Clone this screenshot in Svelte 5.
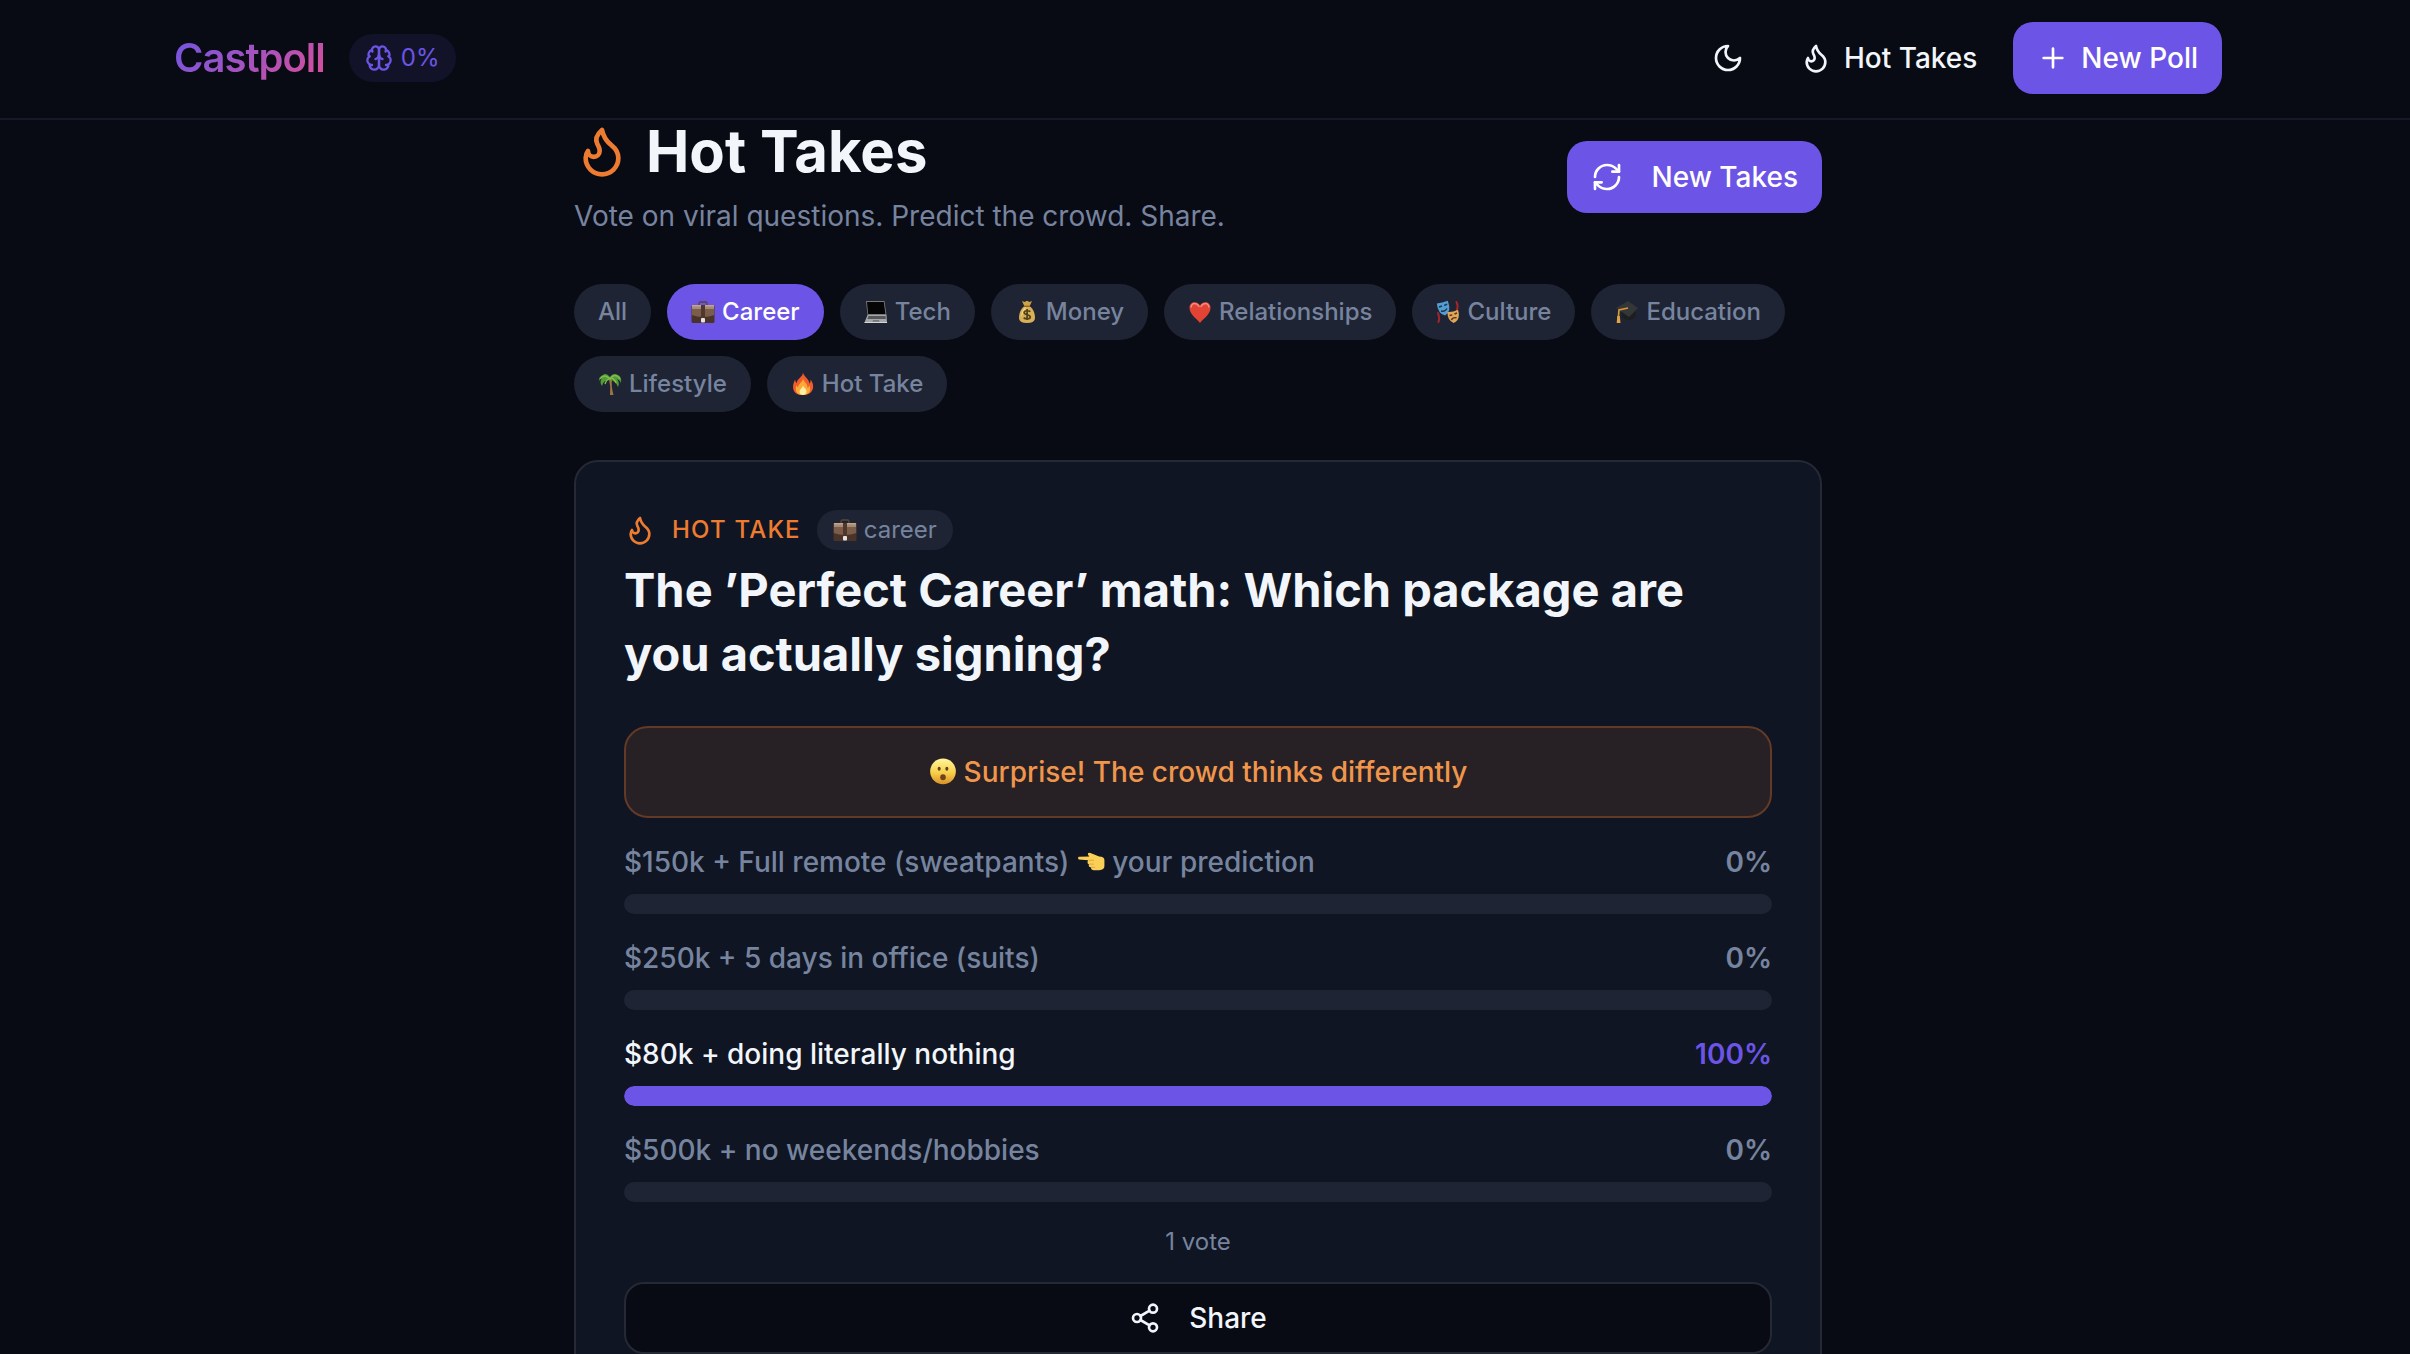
<script>
  let dark = $state(true);
  let active = $state('career');

  const categories = [
    { id: 'all', label: 'All' },
    { id: 'career', label: 'Career', emoji: 'briefcase' },
    { id: 'tech', label: 'Tech', emoji: 'laptop' },
    { id: 'money', label: 'Money', emoji: 'money' },
    { id: 'relationships', label: 'Relationships', emoji: 'heart' },
    { id: 'culture', label: 'Culture', emoji: 'masks' },
    { id: 'education', label: 'Education', emoji: 'cap' },
    { id: 'lifestyle', label: 'Lifestyle', emoji: 'palm' },
    { id: 'hot-take', label: 'Hot Take', emoji: 'fire' }
  ];

  const options = [
    { text: '$150k + Full remote (sweatpants)', percent: 0, predicted: true },
    { text: '$250k + 5 days in office (suits)', percent: 0 },
    { text: '$80k + doing literally nothing', percent: 100, winner: true },
    { text: '$500k + no weekends/hobbies', percent: 0 }
  ];
</script>

{#snippet flame()}
  <path d="M8.5 14.5A2.5 2.5 0 0 0 11 12c0-1.38-.5-2-1-3-1.072-2.143-.224-4.054 2-6 .5 2.5 2 4.9 4 6.5 2 1.6 3 3.5 3 5.5a7 7 0 1 1-14 0c0-1.153.433-2.294 1-3a2.5 2.5 0 0 0 2.5 2.5z" />
{/snippet}

{#snippet emoji(name)}
  <svg class="emoji" viewBox="0 0 24 24" aria-hidden="true">
    {#if name === 'briefcase'}
      <path d="M8 5V3.500q0-1.500 1.500-1.500h5q1.500 0 1.500 1.500V5" fill="none" stroke="#5a4636" stroke-width="1.300" />
      <rect x="0.500" y="5" width="23" height="18" rx="1.500" fill="#4a3328" />
      <path d="M.8 5h22.400v10q-5 2-11.200 2T.8 15z" fill="#7a5e4b" />
      <path d="M1 5h22v4H1z" fill="#a58a74" />
      <path d="M1 5h22v1.500H1z" fill="#c0a48c" />
      <path d="M10 5h4v14h-4z" fill="#50372b" />
      <rect x="10" y="18" width="4" height="4.500" rx="1" fill="#e6e3df" />
    {:else if name === 'laptop'}
      <path d="M2 1h18.500l2 14H3.500z" fill="#77797c" />
      <path d="M3 2h16.800l1.600 12H4.200z" fill="#050506" />
      <path d="M3.500 15h19l.5 7.500H.5z" fill="#a5a6a8" />
      <path d="M4.500 16h17l.4 3H3.500z" fill="#55575b" />
      <path d="M9 20h6l.5 1.800h-7z" fill="#77787a" />
      <path d="M.5 22h22.600v1H.5z" fill="#d4d5d6" />
    {:else if name === 'money'}
      <path d="M7 1l2.500 1L12 .7l2.500 1.200L17 1l-2.500 5.500h-5z" fill="#cba447" />
      <path d="M9.500 6h5C18.500 9 20 13.500 20 18q0 5-8 5t-8-5c0-4.500 1.500-9 5.500-12z" fill="#d7b057" />
      <path d="M7 12c1-2.500 2-4 4-5-.5 3-3 6-5 10z" fill="#f3d98b" />
      <path d="M9 6.300h6" stroke="#956627" stroke-width="1.400" />
      <path d="M15.300 11.800c-1-1.300-6.200-1.700-6.200.8 0 2.800 6.200 1.400 6.200 4.400 0 2.700-5.300 2.200-6.600.6M12.100 9v11" fill="none" stroke="#51421b" stroke-width="1.700" />
    {:else if name === 'heart'}
      <path d="M12 23C8.500 18.500 1.500 14.500 1.500 7.800 1.500 1.500 9 .5 12 5.300 15 .5 22.500 1.500 22.500 7.800 22.500 14.500 15.500 18.500 12 23z" fill="#e24332" />
      <path d="M3 7C4 2 9 2.500 11 6.500M13 6.500C15 2.500 20 2 21 7" fill="none" stroke="#f28b7f" stroke-width="1.500" stroke-linecap="round" />
    {:else if name === 'masks'}
      <path d="M2 13q2 5 .5 9M20.500 2q2 4 .5 8" fill="none" stroke="#a2262a" stroke-width="2" stroke-linecap="round" />
      <path d="M.8 3.500Q6 3 11.800.800 16 12 9 15.500 2 14 .8 3.500z" fill="#559dd1" />
      <path d="M3 7l3-1M8.200 5.500l3-1.300M5 11q4 1 6-2.500" fill="none" stroke="#173854" stroke-width="1.400" />
      <path d="M11.500 12q5 .5 10.500-2.200Q25 20 17.500 23 11 20 11.500 12z" fill="#e1a657" />
      <path d="M13.500 15.500l2.800-.6M18.500 14l2.500-1M15.500 20q1-3 5-2.200" fill="none" stroke="#55351d" stroke-width="1.400" />
    {:else if name === 'cap'}
      <path d="M6 10l14-1 1 7q-5 7-13 2z" fill="#1d1e1f" />
      <path d="M1 8L13 1l10 7-9 9z" fill="#343638" />
      <path d="M13 8L4 10l-1 12" fill="none" stroke="#d99733" stroke-width="1.700" />
      <path d="M2.300 16h2.500l.7 7H1.700z" fill="#e2a442" />
    {:else if name === 'palm'}
      <path d="M11 7h3q-1 7 1.500 16h-3.500q1-8-1-16z" fill="#a27442" />
      <path d="M12 8Q5 8 4 14 1 10 4 6q-3 1-3 4Q0 5 5 3q3-3 7 2 3-5 8-2 4 2 3 8-1-3-4-4 3 4 1 8-2-6-8-7z" fill="#529c37" />
      <path d="M2 7q4-6 10 0 5-7 10 0M12 6q-4 2-5 6M13 6q4 1 5 5" fill="none" stroke="#84bd4c" stroke-width="1.300" />
    {:else if name === 'fire'}
      <path d="M12 .5c.7 4 6 6 6.500 11 1-1 1.200-3 .8-4 5 5 4 15.500-7.300 15.500S.5 14 4.200 7.500c0 2 .8 3 1.500 3.500C6 6.500 12 5 12 .5z" fill="#f15c2d" />
      <path d="M12 6c0 4 5 5 4.500 10 1-.5 1.500-1.500 1.500-3 3 5 .5 10-6 10s-9-5-6-10c0 1.500.5 2 1 2.500C7.500 11 12 10.500 12 6z" fill="#faaa36" />
      <path d="M12 13c0 3 4 3.500 3.500 7-.3 2-2 3-3.500 3s-3.500-1-3.500-3c0-3 3.500-4 3.500-7z" fill="#ffefa1" />
    {:else if name === 'surprised'}
      <defs>
        <linearGradient id="face" x1="0" y1="0" x2="0" y2="1">
          <stop offset="0" stop-color="#fff79a" />
          <stop offset="0.550" stop-color="#f8cf4b" />
          <stop offset="1" stop-color="#d99127" />
        </linearGradient>
      </defs>
      <circle cx="12" cy="11.500" r="11" fill="url(#face)" />
      <ellipse cx="8.700" cy="9.300" rx="1.300" ry="1.700" fill="#62401c" />
      <ellipse cx="15.300" cy="9.300" rx="1.300" ry="1.700" fill="#62401c" />
      <ellipse cx="12" cy="16.500" rx="2.400" ry="2.600" fill="#70431e" />
    {:else if name === 'pointing'}
      <path d="M1.500 9.800Q0 8.500 1.500 7.500l9-.3L9.300 5.500Q9 3.500 11.500 4.200L19 7.200q4.500.3 4.500 3v5.300q0 3.500-4.500 3.500h-4.500q-2.500 0-2.500-2.300-2.500-.4-1.800-2.700-2-.8-.7-3.500z" fill="#f9cf57" />
      <path d="M10 10.500h4.500M10.500 13.800h4M12 16.600h3.500" stroke="#dba53c" stroke-width="0.800" fill="none" />
    {/if}
  </svg>
{/snippet}

<div class="page">
  <header>
    <div class="header-inner">
      <div class="brand">
        <a class="logo" href="/">Castpoll</a>
        <span class="score">
          <svg class="icon" viewBox="0 0 24 24" aria-hidden="true">
            <path d="M12 5a3 3 0 1 0-5.997.125 4 4 0 0 0-2.526 5.770 4 4 0 0 0 .556 6.588A4 4 0 1 0 12 18Z" />
            <path d="M12 5a3 3 0 1 1 5.997.125 4 4 0 0 1 2.526 5.770 4 4 0 0 1-.556 6.588A4 4 0 1 1 12 18Z" />
            <path d="M15 13a4.500 4.500 0 0 1-3-4 4.500 4.500 0 0 1-3 4" />
            <path d="M17.599 6.500a3 3 0 0 0 .399-1.375M6.003 5.125A3 3 0 0 0 6.401 6.500M3.477 10.896a4 4 0 0 1 .585-.396M19.938 10.500a4 4 0 0 1 .585.396M6 18a4 4 0 0 1-1.967-.516M19.967 17.484A4 4 0 0 1 18 18" />
          </svg>
          0%
        </span>
      </div>
      <nav>
        <button class="theme" aria-label="Toggle theme" onclick={() => (dark = !dark)}>
          <svg class="icon" viewBox="0 0 24 24" aria-hidden="true">
            <path d="M12 3a6 6 0 0 0 9 9 9 9 0 1 1-9-9Z" />
          </svg>
        </button>
        <a class="nav-link" href="/hot-takes">
          <svg class="icon" viewBox="0 0 24 24" aria-hidden="true">{@render flame()}</svg>
          Hot Takes
        </a>
        <a class="btn new-poll" href="/create">
          <svg class="icon" viewBox="0 0 24 24" aria-hidden="true"><path d="M5 12h14M12 5v14" /></svg>
          New Poll
        </a>
      </nav>
    </div>
  </header>

  <main>
    <div class="intro">
      <div>
        <h1>
          <svg class="icon" viewBox="0 0 24 24" aria-hidden="true">{@render flame()}</svg>
          Hot Takes
        </h1>
        <p>Vote on viral questions. Predict the crowd. Share.</p>
      </div>
      <button class="btn new-takes">
        <svg class="icon" viewBox="0 0 24 24" aria-hidden="true">
          <path d="M3 12a9 9 0 0 1 9-9 9.750 9.750 0 0 1 6.740 2.740L21 8" />
          <path d="M21 3v5h-5" />
          <path d="M21 12a9 9 0 0 1-9 9 9.750 9.750 0 0 1-6.740-2.740L3 16" />
          <path d="M8 16H3v5" />
        </svg>
        New Takes
      </button>
    </div>

    <div class="filters">
      {#each categories as category}
        <button class="chip" class:active={active === category.id} onclick={() => (active = category.id)}>
          {#if category.emoji}{@render emoji(category.emoji)}{/if}
          {category.label}
        </button>
      {/each}
    </div>

    <article class="card">
      <div class="card-meta">
        <svg class="icon" viewBox="0 0 24 24" aria-hidden="true">{@render flame()}</svg>
        <span class="kicker">Hot Take</span>
        <span class="tag">{@render emoji('briefcase')} career</span>
      </div>
      <h2>The ’Perfect Career’ math: Which package are you actually signing?</h2>

      <div class="notice">{@render emoji('surprised')} Surprise! The crowd thinks differently</div>

      <div class="results">
        {#each options as option}
          <div class="option" class:winner={option.winner}>
            <div class="option-row">
              <span class="option-text">
                {option.text}
                {#if option.predicted}{@render emoji('pointing')} your prediction{/if}
              </span>
              <span class="percent">{option.percent}%</span>
            </div>
            <div class="track">
              <div class="fill" style="width: {option.percent}%"></div>
            </div>
          </div>
        {/each}
      </div>

      <p class="votes">1 vote</p>
      <button class="share">
        <svg class="icon" viewBox="0 0 24 24" aria-hidden="true">
          <circle cx="18" cy="5" r="3" />
          <circle cx="6" cy="12" r="3" />
          <circle cx="18" cy="19" r="3" />
          <path d="M8.590 13.510l6.830 3.980M15.410 6.510l-6.820 3.980" />
        </svg>
        Share
      </button>
    </article>
  </main>
</div>

<style>
  :global(body) {
    margin: 0;
    background: #080a14;
  }

  .page {
    height: 100vh;
    overflow: hidden;
    box-sizing: border-box;
    padding-right: 14px;
    background: #080a14;
    color: #f2f5fa;
    font-family: Inter, "Liberation Sans", sans-serif;
    font-size: 28px;
    line-height: 40px;
  }

  a {
    color: inherit;
    text-decoration: none;
  }

  button {
    border: 0;
    font: inherit;
    color: inherit;
    cursor: pointer;
  }

  .icon {
    width: 32px;
    height: 32px;
    flex-shrink: 0;
    fill: none;
    stroke: currentColor;
    stroke-width: 2;
    stroke-linecap: round;
    stroke-linejoin: round;
  }

  .emoji {
    width: 24px;
    height: 24px;
    flex-shrink: 0;
    vertical-align: -4px;
  }

  header {
    margin-right: -14px;
    padding: 0 14px 2px 0;
    background: #080b13;
    border-bottom: 2px solid #171a26;
  }

  .header-inner {
    display: flex;
    align-items: center;
    justify-content: space-between;
    max-width: 2048px;
    height: 116px;
    margin: 0 auto;
  }

  .brand,
  nav {
    display: flex;
    align-items: center;
  }

  .brand {
    gap: 24px;
  }

  .logo {
    font-size: 40px;
    font-weight: 600;
    letter-spacing: -1px;
    line-height: 56px;
    background: linear-gradient(135deg, #6d56e6, #db4f96);
    background-clip: text;
    color: transparent;
  }

  .score {
    display: flex;
    align-items: center;
    gap: 8px;
    padding: 8px 16px;
    border-radius: 24px;
    background: #121328;
    color: #6c55e5;
    font-size: 24px;
    line-height: 32px;
  }

  .score .icon {
    width: 28px;
    height: 28px;
  }

  .theme {
    display: flex;
    padding: 20px;
    background: none;
  }

  .nav-link {
    display: flex;
    align-items: center;
    gap: 12px;
    padding: 16px 36px;
    font-weight: 500;
  }

  .btn {
    display: flex;
    align-items: center;
    height: 72px;
    box-sizing: border-box;
    padding: 0 24px;
    border-radius: 20px;
    background: #6c55e6;
    color: #fff;
    font-weight: 500;
  }

  .new-poll {
    gap: 12px;
  }

  .new-takes {
    gap: 28px;
  }

  main {
    max-width: 1248px;
    margin: 0 auto;
  }

  .intro {
    display: flex;
    align-items: center;
    justify-content: space-between;
    margin-bottom: 50px;
  }

  h1 {
    display: flex;
    align-items: center;
    gap: 16px;
    margin: 0;
    font-size: 58px;
    font-weight: 700;
    line-height: 62px;
  }

  h1 .icon {
    width: 56px;
    height: 56px;
    color: #ed7c31;
  }

  .intro p {
    margin: 16px 0 0;
    color: #77849f;
    line-height: 36px;
  }

  .filters {
    display: flex;
    flex-wrap: wrap;
    gap: 16px;
    margin-bottom: 48px;
  }

  .chip {
    display: flex;
    align-items: center;
    gap: 7px;
    padding: 8px 24px;
    border-radius: 28px;
    background: #1e2433;
    color: #77849f;
    font-size: 24px;
    font-weight: 500;
  }

  .chip.active {
    background: #6c55e6;
    color: #fff;
  }

  .card {
    padding: 48px;
    border: 2px solid #252936;
    border-radius: 24px;
    background: #0f1522;
  }

  .card-meta {
    display: flex;
    align-items: center;
    gap: 16px;
    margin-bottom: 8px;
    color: #ed7c31;
    font-size: 24px;
  }

  .kicker {
    font-weight: 500;
    letter-spacing: 0.05em;
    text-transform: uppercase;
  }

  .tag {
    display: flex;
    align-items: center;
    gap: 7px;
    padding: 0 16px;
    border-radius: 20px;
    background: #1e2433;
    color: #77849f;
  }

  h2 {
    margin: 0 0 40px;
    font-size: 47px;
    font-weight: 700;
    line-height: 64px;
  }

  .notice {
    display: flex;
    align-items: center;
    justify-content: center;
    gap: 7px;
    padding: 24px;
    border: 2px solid #633a26;
    border-radius: 24px;
    background: #272125;
    color: #f0964c;
    font-weight: 500;
  }

  .notice .emoji,
  .option .emoji {
    width: 28px;
    height: 28px;
  }

  .results {
    display: flex;
    flex-direction: column;
    gap: 24px;
    margin-top: 24px;
  }

  .option {
    color: #77849f;
    font-weight: 500;
  }

  .option-row {
    display: flex;
    justify-content: space-between;
    margin-bottom: 12px;
  }

  .percent {
    font-weight: 600;
  }

  .winner {
    color: #f2f5fa;
  }

  .winner .percent {
    color: #6c55e6;
  }

  .track {
    height: 20px;
    overflow: hidden;
    border-radius: 10px;
    background: #1e2433;
  }

  .fill {
    height: 100%;
    border-radius: 10px;
    background: #6c55e6;
  }

  .votes {
    margin: 24px 0;
    color: #77849f;
    font-size: 24px;
    line-height: 32px;
    text-align: center;
  }

  .share {
    display: flex;
    align-items: center;
    justify-content: center;
    gap: 28px;
    width: 100%;
    height: 72px;
    border: 2px solid #252936;
    border-radius: 20px;
    background: #080a14;
    font-weight: 500;
  }
</style>
